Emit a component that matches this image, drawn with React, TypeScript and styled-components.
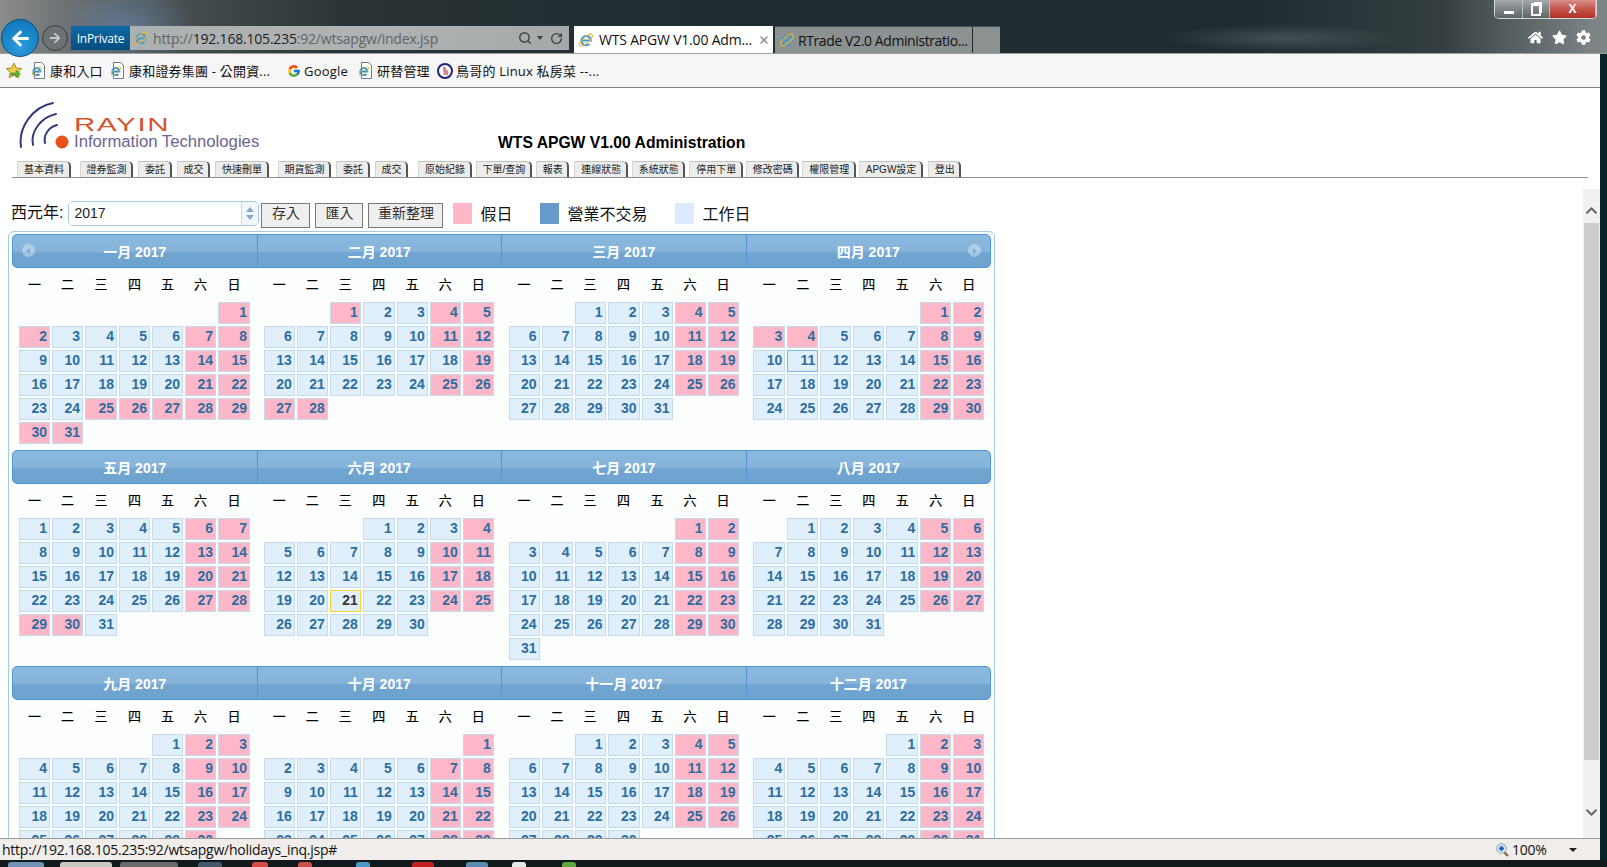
import styled, { createGlobalStyle } from "styled-components";
import { FaArrowLeft, FaArrowRight, FaHome, FaStar, FaCog, FaChevronUp, FaChevronDown } from "react-icons/fa";
import { FcGoogle } from "react-icons/fc";
import { Search, RotateCw, X } from "lucide-react";

const CJK = `"Liberation Sans", "Noto Sans CJK TC", sans-serif`;
const UI = `"Open Sans", "Noto Sans CJK TC", sans-serif`;

const GlobalStyle = createGlobalStyle`
  html, body {
    margin: 0;
    height: 100%;
    overflow: hidden;
    background: #0a2328;
    font-family: ${CJK};
  }
  #root {
    height: 100%;
  }
`;

const Screen = styled.div`
  width: 1607px;
  height: 867px;
  display: flex;
  flex-direction: column;
  overflow: hidden;
`;

/* ---- browser chrome ---- */
const TopChrome = styled.div`
  height: 53px;
  flex: none;
  display: flex;
  flex-direction: column;
  border-bottom: 1px solid #9aa0a0;
  background:
    radial-gradient(ellipse 70px 40px at 125px 25px, rgba(100, 135, 175, 0.55), transparent),
    radial-gradient(ellipse 120px 14px at 1280px 38px, rgba(130, 140, 140, 0.35), transparent),
    linear-gradient(90deg, #8b8c8c 0, #6b7072 70px, #454c4e 190px, #2b3436 340px, #1f2c31 700px, #1e2c31 1250px, #343e40 1440px, #7a8284 1590px, #7f8688 1607px);
`;

const WindowControls = styled.div`
  height: 25px;
  flex: none;
  display: flex;
  justify-content: flex-end;
  padding-right: 10px;
`;

const ControlGroup = styled.div`
  height: 18px;
  display: flex;
  border: 1px solid #d5d8d8;
  border-top: none;
  border-radius: 0 0 5px 5px;
  overflow: hidden;
`;

const ControlButton = styled.div<{ $width: number; $close?: boolean }>`
  width: ${(p) => p.$width}px;
  display: flex;
  align-items: center;
  justify-content: center;
  color: #fff;
  font: bold 12px "Liberation Sans", sans-serif;
  border-right: 1px solid #b7bcbc;
  background: ${(p) =>
    p.$close
      ? "linear-gradient(#d9908a, #c4544a 50%, #b23126)"
      : "linear-gradient(#a3a9aa, #7f8687 50%, #5e6566)"};
`;

const MinimizeGlyph = styled.span`
  width: 10px;
  height: 3px;
  margin-top: 6px;
  background: #fff;
`;

const RestoreGlyph = styled.span`
  width: 6px;
  height: 8px;
  border: 2px solid #fff;
  border-top-width: 3px;
  box-shadow: 2px -2px 0 -1px #fff;
`;

const NavRow = styled.div`
  flex: 1;
  display: flex;
  align-items: flex-end;
  position: relative;
  padding-left: 71px;
`;

const BackButton = styled.div`
  position: absolute;
  left: 1px;
  top: -6px;
  width: 36px;
  height: 36px;
  border-radius: 50%;
  background: radial-gradient(circle at 50% 75%, #2b9be0, #0b70b4);
  border: 1px solid #0b4d7a;
  display: flex;
  align-items: center;
  justify-content: center;
  color: #fff;
  font-size: 19px;
`;

const ForwardButton = styled.div`
  position: absolute;
  left: 42px;
  top: 0;
  width: 24px;
  height: 24px;
  border-radius: 50%;
  background: #6c7273;
  border: 1px solid #3a4041;
  display: flex;
  align-items: center;
  justify-content: center;
  color: #c4c8c8;
  font-size: 12px;
`;

const AddressBar = styled.div`
  width: 498px;
  height: 24px;
  margin-bottom: 3px;
  display: flex;
  align-items: center;
  background: linear-gradient(90deg, #aab0b1, #b0b3b3 60%, #a6a9a9);
  font: 14px ${UI};
  letter-spacing: -0.2px;
  color: #5e6466;
`;

const InPrivate = styled.div`
  width: 59px;
  height: 100%;
  flex: none;
  background: linear-gradient(#0d6aa6, #064d80);
  color: #fff;
  font-size: 12px;
  display: flex;
  align-items: center;
  justify-content: center;
`;

const AddressIcon = styled.span`
  margin-left: 3px;
  display: flex;
`;

const UrlText = styled.span`
  margin-left: 4px;
  flex: 1;
  b {
    font-weight: 400;
    color: #1e2224;
  }
`;

const BarTools = styled.div`
  display: flex;
  align-items: center;
  gap: 3px;
  padding-right: 6px;
  color: #3e4446;
`;

const TinyCaret = styled.span`
  width: 0;
  height: 0;
  border: 3px solid transparent;
  border-top: 4px solid #3e4446;
  margin: 3px 4px 0 2px;
`;

const TabStrip = styled.div`
  height: 27px;
  margin-left: 5px;
  display: flex;
`;

const BrowserTab = styled.div<{ $active?: boolean; $width: number }>`
  width: ${(p) => p.$width}px;
  display: flex;
  align-items: center;
  gap: ${(p) => (p.$active ? 5 : 3)}px;
  padding-left: 4px;
  box-sizing: border-box;
  font: 14px ${UI};
  letter-spacing: ${(p) => (p.$active ? -0.2 : -0.4)}px;
  white-space: nowrap;
  overflow: hidden;
  color: #111;
  background: ${(p) => (p.$active ? "#fff" : "#8c9292")};
  border-right: ${(p) => (p.$active ? "none" : "1px solid #262c2e")};
  border-top: ${(p) => (p.$active ? "none" : "1px solid #4a5052")};
  margin-right: ${(p) => (p.$active ? 2 : 0)}px;
`;

const TabClose = styled.span`
  margin-left: auto;
  margin-right: 3px;
  display: flex;
  color: #8d8d8d;
`;

const BlankTab = styled.div`
  width: 27px;
  background: #8c9292;
  border-top: 1px solid #4a5052;
`;

const ToolIcons = styled.div`
  position: absolute;
  right: 16px;
  top: 5px;
  display: flex;
  gap: 9px;
  color: #fff;
  font-size: 15px;
`;

const Middle = styled.div`
  flex: 1;
  min-height: 0;
  display: flex;
`;

const BrowserColumn = styled.div`
  flex: 1;
  min-width: 0;
  display: flex;
  flex-direction: column;
`;

const EdgeStrip = styled.div`
  width: 7px;
  flex: none;
  background: #0a2328;
`;

const FavBar = styled.div`
  height: 34px;
  flex: none;
  box-sizing: border-box;
  display: flex;
  align-items: center;
  padding-left: 6px;
  background: #f6f6f6;
  border-bottom: 1px solid #7f7f7f;
  font: 13px ${UI};
  letter-spacing: 0.2px;
  color: #111;
`;

const FavItem = styled.span<{ $width: number }>`
  width: ${(p) => p.$width}px;
  flex: none;
  display: flex;
  align-items: center;
  gap: 3px;
  white-space: nowrap;
`;

/* ---- page header frame ---- */
const PageArea = styled.div`
  flex: 1;
  min-height: 0;
  display: flex;
  flex-direction: column;
  background: #fff;
`;

const HeaderFrame = styled.div`
  height: 101px;
  flex: none;
`;

const HeaderTop = styled.div`
  height: 72px;
  display: flex;
  padding-left: 18px;
`;

const LogoBlock = styled.div`
  width: 480px;
  flex: none;
  display: flex;
  padding-top: 10px;
`;

const LogoText = styled.div`
  padding-top: 20px;
  display: flex;
  flex-direction: column;
`;

const LogoName = styled.span`
  display: block;
  font: 18px/15px "Liberation Sans", sans-serif;
  color: #d4552c;
  letter-spacing: 1px;
  transform: scaleX(1.64);
  transform-origin: left center;
`;

const LogoTag = styled.span`
  font: 16.7px/18px "Liberation Sans", sans-serif;
  color: #6b6490;
  white-space: nowrap;
`;

const Title = styled.h1`
  margin: 0;
  align-self: flex-end;
  padding-bottom: 8px;
  font: bold 15.7px "Liberation Sans", sans-serif;
  color: #000;
`;

const TabRow = styled.div`
  margin: 0 12px;
  padding-left: 5px;
  height: 18px;
  box-sizing: border-box;
  display: flex;
  border-bottom: 1px solid #8f8f8f;
`;

const MenuTab = styled.div<{ $gap: number }>`
  margin-left: ${(p) => p.$gap}px;
  height: 16px;
  margin-top: 1px;
  box-sizing: border-box;
  padding: 0 4.500px 0 6px;
  background: #ecedea;
  border-top: 1px solid #c4c4c4;
  border-left: 1px solid #d6d6d6;
  border-right: 2px solid #555;
  border-top-right-radius: 5px;
  font: 10px/16px ${CJK};
  color: #222;
  white-space: nowrap;
`;

const FrameBody = styled.div`
  flex: 1;
  min-height: 0;
  display: flex;
`;

const Content = styled.div`
  flex: 1;
  min-width: 0;
  overflow: hidden;
  padding: 12px 0 0 8px;
`;

const ScrollTrack = styled.div`
  width: 17px;
  flex: none;
  display: flex;
  flex-direction: column;
  background: #f0f0f0;
`;

const ScrollArrow = styled.div<{ $height: number; $align: string }>`
  height: ${(p) => p.$height}px;
  flex: none;
  display: flex;
  align-items: ${(p) => p.$align};
  justify-content: center;
  box-sizing: border-box;
  padding-bottom: 6px;
  color: #666;
  font-size: 13px;
`;

const ScrollThumb = styled.div`
  height: 537px;
  flex: none;
  margin: 0 1px;
  background: #cdcdcd;
`;

const ScrollRest = styled.div`
  flex: 1;
`;

/* ---- year form + legend ---- */
const FormRow = styled.div`
  height: 30px;
  display: flex;
  align-items: flex-start;
  font: 16px ${CJK};
  color: #111;
`;

const YearLabel = styled.span`
  margin: 2px 5px 0 3px;
  line-height: 20px;
`;

const YearField = styled.div`
  width: 189px;
  height: 23px;
  display: flex;
  border: 1px solid #a6c9e2;
  border-radius: 5px;
  overflow: hidden;
`;

const YearInput = styled.input`
  flex: 1;
  min-width: 0;
  border: none;
  outline: none;
  padding: 0 0 2px 5px;
  font: 14px "Liberation Sans", sans-serif;
  color: #222;
`;

const Spinner = styled.div`
  width: 17px;
  flex: none;
  display: flex;
  flex-direction: column;
  align-items: center;
  justify-content: space-around;
  padding: 3px 0;
  box-sizing: border-box;
  background: #f2f7fb;
  border-left: 1px solid #c5dbec;
`;

const SpinUp = styled.span`
  width: 0;
  height: 0;
  border: 4px solid transparent;
  border-top: none;
  border-bottom: 5px solid #7fa9cf;
`;

const SpinDown = styled.span`
  width: 0;
  height: 0;
  border: 4px solid transparent;
  border-bottom: none;
  border-top: 5px solid #7fa9cf;
`;

const FormButton = styled.button<{ $width: number; $gap: number }>`
  width: ${(p) => p.$width}px;
  height: 25px;
  margin: 2px 0 0 ${(p) => p.$gap}px;
  padding: 0 0 5px;
  border: 1px solid #777;
  background: #efefef;
  font: 14px/1 ${CJK};
  color: #333;
`;

const Swatch = styled.span<{ $color: string; $gap: number }>`
  width: 19px;
  height: 21px;
  margin: 2px 8px 0 ${(p) => p.$gap}px;
  background: ${(p) => p.$color};
`;

const LegendText = styled.span`
  margin-top: 4px;
  line-height: 20px;
`;

/* ---- datepicker ---- */
const Panel = styled.div`
  width: 979px;
  padding: 2px 3px 0;
  border: 1px solid #a6c9e2;
  border-radius: 6px;
  background: #fcfdfd;
`;

const MonthGroup = styled.div`
  height: 216px;
`;

const HeaderBar = styled.div`
  height: 34px;
  box-sizing: border-box;
  display: flex;
  border: 1px solid #4e97d4;
  border-radius: 5px;
  overflow: hidden;
  background: linear-gradient(#8ab7dc 0, #87b4da 50%, #70a5d1 56%, #6ea2cf 100%);
`;

const MonthTitle = styled.div`
  flex: 1 1 0;
  box-sizing: border-box;
  position: relative;
  display: flex;
  align-items: center;
  justify-content: center;
  color: #fff;
  font: bold 14px ${CJK};
  &:not(:last-child) {
    border-right: 1px solid #4e97d4;
  }
`;

const NavCircle = styled.span<{ $side: "left" | "right" }>`
  position: absolute;
  ${(p) => p.$side}: 9px;
  top: 9px;
  width: 13px;
  height: 13px;
  border-radius: 50%;
  background: rgba(255, 255, 255, 0.35);
  display: flex;
  align-items: center;
  justify-content: center;
  &::after {
    content: "";
    border: 3px solid transparent;
    ${(p) => (p.$side === "left" ? "border-right: 4px solid #7fadd3; margin-left: -4px;" : "border-left: 4px solid #7fadd3; margin-right: -4px;")}
  }
`;

const MonthsRow = styled.div`
  display: flex;
`;

const MonthBody = styled.div`
  flex: 1 1 0;
  padding-left: 7px;
`;

const WeekGrid = styled.div<{ $tracks: string }>`
  display: grid;
  box-sizing: border-box;
  grid-template-columns: ${(p) => p.$tracks};
  column-gap: 2px;
  height: 34px;
  padding-bottom: 4px;
  align-items: center;
  font: 13px ${CJK};
  color: #000;
  text-align: center;
  -webkit-text-stroke: 0.2px #000;
`;

const DayGrid = styled.div<{ $tracks: string }>`
  display: grid;
  grid-template-columns: ${(p) => p.$tracks};
  grid-auto-rows: 22px;
  gap: 2px;
`;

const DayCell = styled.div<{ $kind: "work" | "holiday" | "today" | "focus"; $offset: number }>`
  grid-column-start: ${(p) => p.$offset || "auto"};
  box-sizing: border-box;
  padding-right: 2px;
  text-align: right;
  font: bold 14px/19px "Liberation Sans", sans-serif;
  color: ${(p) => (p.$kind === "today" ? "#363636" : "#2e6e9e")};
  background: ${(p) => (p.$kind === "holiday" ? "#feb6c9" : "#dfeffc")};
  border: 1px solid ${(p) => (p.$kind === "today" ? "#fad42e" : p.$kind === "focus" ? "#79b7e7" : "#c5dbec")};
`;

/* ---- status and task bars ---- */
const StatusBar = styled.div`
  height: 22px;
  flex: none;
  box-sizing: border-box;
  display: flex;
  align-items: center;
  padding: 0 2px;
  background: #f0edeb;
  border-top: 1px solid #9a9a9a;
  font: 14px ${UI};
  letter-spacing: -0.25px;
  color: #111;
`;

const StatusUrl = styled.span`
  flex: 1;
`;

const ZoomGroup = styled.div`
  width: 102px;
  display: flex;
  align-items: center;
  gap: 3px;
`;

const ZoomCaret = styled.span`
  width: 0;
  height: 0;
  margin-left: 19px;
  border: 4px solid transparent;
  border-top: 4px solid #222;
  border-bottom: none;
`;

const Taskbar = styled.div`
  height: 7px;
  flex: none;
  display: flex;
  align-items: flex-end;
  background: #11191d;
  overflow: hidden;
`;

const TaskItem = styled.span<{ $left: number; $width: number; $color: string }>`
  margin-left: ${(p) => p.$left}px;
  width: ${(p) => p.$width}px;
  height: 5px;
  flex: none;
  background: ${(p) => p.$color};
  border-radius: 3px 3px 0 0;
`;

/* ---- small drawn icons ---- */
function IeIcon({ size = 16 }: { size?: number }) {
  return (
    <svg width={size} height={size} viewBox="0 0 16 16" style={{ flex: "none" }}>
      <path d="M3.6 8.6h9.2a4.7 4.7 0 1 0-1.3 3.3" fill="none" stroke="#3d9bd8" strokeWidth="2" />
      <ellipse cx="8" cy="8" rx="8" ry="3" transform="rotate(-42 8 8)" fill="none" stroke="#f0b429" strokeWidth="1" />
    </svg>
  );
}

function PageIcon() {
  return (
    <svg width="16" height="17" viewBox="0 0 16 17" style={{ flex: "none" }}>
      <path d="M3.5.5h7l3 3v13h-10z" fill="#fff" stroke="#6a7a8c" />
      <path d="M2 9.5h7.500a3.600 3.600 0 1 0-1 2.600" fill="none" stroke="#2f8fd4" strokeWidth="1.800" />
      <ellipse cx="6" cy="9" rx="6" ry="2.200" transform="rotate(-42 6 9)" fill="none" stroke="#f0b429" strokeWidth=".8" />
    </svg>
  );
}

function FavStar() {
  return (
    <svg width="17" height="18" viewBox="0 0 17 18" style={{ flex: "none" }}>
      <path d="M8 1l2.300 5 5.400.6-4 3.700 1.100 5.400L8 13l-4.800 2.700 1.100-5.400-4-3.700L5.700 6z" fill="#f2d04c" stroke="#a8871c" />
      <path d="M5 11h5V8.500l4.500 3.500L10 15.500V13H5z" fill="#62b63e" stroke="#3a7d20" strokeWidth=".6" />
    </svg>
  );
}

function BirdIcon() {
  return (
    <svg width="16" height="16" viewBox="0 0 16 16" style={{ flex: "none" }}>
      <circle cx="8" cy="8" r="7" fill="#fff" stroke="#24247a" strokeWidth="2" />
      <path d="M6 4c2-1 3 0 3 2 2 1 3 3 2 6H6c1-2 1-3 0-4z" fill="#d08a98" />
    </svg>
  );
}

function MagnifierIcon() {
  return (
    <svg width="13" height="14" viewBox="0 0 13 14" style={{ flex: "none" }}>
      <path d="M8 9l4 4" stroke="#8a6a3c" strokeWidth="2.400" />
      <circle cx="5.500" cy="5.500" r="4.800" fill="#d8e6f4" stroke="#8aa0b8" />
      <path d="M3 5.500h5M5.500 3v5" stroke="#1560c0" strokeWidth="2" />
    </svg>
  );
}

function LogoArcs() {
  return (
    <svg width="56" height="54" viewBox="0 0 56 54" style={{ flex: "none" }}>
      <g fill="none" stroke="#353a7a" strokeLinecap="round">
        <path d="M3 49C0 30 14 9 35 5" strokeWidth="2" />
        <path d="M15 47C12 34 23 19 38 16" strokeWidth="2" />
        <path d="M27 45C25 37 31 29 39 27" strokeWidth="2" />
      </g>
      <circle cx="44" cy="44" r="6.500" fill="#e8501a" />
    </svg>
  );
}

/* ---- data ---- */
const MENU: [string, number][] = [
  ["基本資料", 0], ["證券監測", 9], ["委託", 5], ["成交", 5], ["快速刪單", 5],
  ["期貨監測", 9], ["委託", 5], ["成交", 5], ["原始紀錄", 10], ["下單/查詢", 4],
  ["報表", 4], ["連線狀態", 5], ["系統狀態", 4], ["停用下單", 4], ["修改密碼", 3],
  ["權限管理", 3], ["APGW設定", 3], ["登出", 5],
];

const MONTH_NAMES = ["一月", "二月", "三月", "四月", "五月", "六月", "七月", "八月", "九月", "十月", "十一月", "十二月"];
const WEEK = ["一", "二", "三", "四", "五", "六", "日"];
const TRACKS = [
  "31px 31px 32px 31px 31px 31px 32px",
  "31px 31px 31px 32px 31px 31px 31px",
  "31px 31px 31px 32px 31px 31px 31px",
  "32px 31px 31px 31px 32px 31px 31px",
];

// extra closed days on top of the weekends
const EXTRA_HOLIDAYS: Record<number, number[]> = {
  0: [2, 25, 26, 27, 30, 31],
  1: [1, 27, 28],
  3: [3, 4],
  4: [29, 30],
};

// saturdays that were worked
const MAKEUP_DAYS: Record<number, number[]> = {
  1: [18],
  5: [3],
};

function dayKind(month: number, day: number) {
  if (month === 5 && day === 21) return "today" as const;
  if (MAKEUP_DAYS[month]?.includes(day)) return "work" as const;
  const weekday = new Date(2017, month, day).getDay();
  if (weekday === 0 || weekday === 6 || EXTRA_HOLIDAYS[month]?.includes(day)) return "holiday" as const;
  if (month === 3 && day === 11) return "focus" as const;
  return "work" as const;
}

function Month({ month, tracks }: { month: number; tracks: string }) {
  const count = new Date(2017, month + 1, 0).getDate();
  const firstColumn = ((new Date(2017, month, 1).getDay() + 6) % 7) + 1;
  return (
    <MonthBody>
      <WeekGrid $tracks={tracks}>
        {WEEK.map((w) => (
          <span key={w}>{w}</span>
        ))}
      </WeekGrid>
      <DayGrid $tracks={tracks}>
        {Array.from({ length: count }, (_, i) => (
          <DayCell key={i} $kind={dayKind(month, i + 1)} $offset={i === 0 ? firstColumn : 0}>
            {i + 1}
          </DayCell>
        ))}
      </DayGrid>
    </MonthBody>
  );
}

export default function App() {
  const groups = [0, 4, 8];
  return (
    <>
      <GlobalStyle />
      <Screen>
        <TopChrome>
          <WindowControls>
            <ControlGroup>
              <ControlButton $width={27}>
                <MinimizeGlyph />
              </ControlButton>
              <ControlButton $width={26}>
                <RestoreGlyph />
              </ControlButton>
              <ControlButton $width={45} $close>
                X
              </ControlButton>
            </ControlGroup>
          </WindowControls>
          <NavRow>
            <BackButton>
              <FaArrowLeft />
            </BackButton>
            <ForwardButton>
              <FaArrowRight />
            </ForwardButton>
            <AddressBar>
              <InPrivate>InPrivate</InPrivate>
              <AddressIcon>
                <IeIcon />
              </AddressIcon>
              <UrlText>
                http://<b>192.168.105.235</b>:92/wtsapgw/index.jsp
              </UrlText>
              <BarTools>
                <Search size={14} strokeWidth={2.5} />
                <TinyCaret />
                <RotateCw size={13} strokeWidth={2.5} />
              </BarTools>
            </AddressBar>
            <TabStrip>
              <BrowserTab $active $width={199}>
                <IeIcon />
                WTS APGW V1.00 Adm...
                <TabClose>
                  <X size={12} strokeWidth={3} />
                </TabClose>
              </BrowserTab>
              <BrowserTab $width={198}>
                <IeIcon />
                RTrade V2.0 Administratio...
              </BrowserTab>
              <BlankTab />
            </TabStrip>
            <ToolIcons>
              <FaHome />
              <FaStar />
              <FaCog />
            </ToolIcons>
          </NavRow>
        </TopChrome>
        <Middle>
          <BrowserColumn>
            <FavBar>
              <FavItem $width={25}>
                <FavStar />
              </FavItem>
              <FavItem $width={79}>
                <PageIcon />
                康和入口
              </FavItem>
              <FavItem $width={177}>
                <PageIcon />
                康和證券集團 - 公開資...
              </FavItem>
              <FavItem $width={71}>
                <FcGoogle size={14} />
                Google
              </FavItem>
              <FavItem $width={79}>
                <PageIcon />
                研替管理
              </FavItem>
              <FavItem $width={170}>
                <BirdIcon />
                鳥哥的 Linux 私房菜 --...
              </FavItem>
            </FavBar>
            <PageArea>
              <HeaderFrame>
                <HeaderTop>
                  <LogoBlock>
                    <LogoArcs />
                    <LogoText>
                      <LogoName>RAYIN</LogoName>
                      <LogoTag>Information Technologies</LogoTag>
                    </LogoText>
                  </LogoBlock>
                  <Title>WTS APGW V1.00 Administration</Title>
                </HeaderTop>
                <TabRow>
                  {MENU.map(([name, gap], i) => (
                    <MenuTab key={i} $gap={gap}>
                      {name}
                    </MenuTab>
                  ))}
                </TabRow>
              </HeaderFrame>
              <FrameBody>
                <Content>
                  <FormRow>
                    <YearLabel>西元年:</YearLabel>
                    <YearField>
                      <YearInput readOnly value="2017" />
                      <Spinner>
                        <SpinUp />
                        <SpinDown />
                      </Spinner>
                    </YearField>
                    <FormButton $width={49} $gap={2}>存入</FormButton>
                    <FormButton $width={48} $gap={5}>匯入</FormButton>
                    <FormButton $width={75} $gap={5}>重新整理</FormButton>
                    <Swatch $color="#feb6c9" $gap={10} />
                    <LegendText>假日</LegendText>
                    <Swatch $color="#6699cc" $gap={28} />
                    <LegendText>營業不交易</LegendText>
                    <Swatch $color="#dbeafc" $gap={28} />
                    <LegendText>工作日</LegendText>
                  </FormRow>
                  <Panel>
                    {groups.map((first) => (
                      <MonthGroup key={first}>
                        <HeaderBar>
                          {[0, 1, 2, 3].map((n) => (
                            <MonthTitle key={n}>
                              {first === 0 && n === 0 && <NavCircle $side="left" />}
                              {MONTH_NAMES[first + n]} 2017
                              {first === 0 && n === 3 && <NavCircle $side="right" />}
                            </MonthTitle>
                          ))}
                        </HeaderBar>
                        <MonthsRow>
                          {[0, 1, 2, 3].map((n) => (
                            <Month key={n} month={first + n} tracks={TRACKS[n]} />
                          ))}
                        </MonthsRow>
                      </MonthGroup>
                    ))}
                  </Panel>
                </Content>
                <ScrollTrack>
                  <ScrollArrow $height={34} $align="flex-end">
                    <FaChevronUp />
                  </ScrollArrow>
                  <ScrollThumb />
                  <ScrollRest />
                  <ScrollArrow $height={46} $align="center">
                    <FaChevronDown />
                  </ScrollArrow>
                </ScrollTrack>
              </FrameBody>
            </PageArea>
            <StatusBar>
              <StatusUrl>http://192.168.105.235:92/wtsapgw/holidays_inq.jsp#</StatusUrl>
              <ZoomGroup>
                <MagnifierIcon />
                100%
                <ZoomCaret />
              </ZoomGroup>
            </StatusBar>
          </BrowserColumn>
          <EdgeStrip />
        </Middle>
        <Taskbar>
          <TaskItem $left={8} $width={36} $color="#6f93b5" />
          <TaskItem $left={16} $width={52} $color="#c8c8c0" />
          <TaskItem $left={8} $width={58} $color="#6a6a6a" />
          <TaskItem $left={20} $width={24} $color="#46566a" />
          <TaskItem $left={30} $width={16} $color="#d84a4a" />
          <TaskItem $left={30} $width={14} $color="#c8504a" />
          <TaskItem $left={44} $width={14} $color="#4a9ac8" />
          <TaskItem $left={42} $width={22} $color="#c02020" />
          <TaskItem $left={32} $width={22} $color="#5a8ab0" />
          <TaskItem $left={24} $width={14} $color="#e8e8e8" />
          <TaskItem $left={36} $width={14} $color="#5ca83c" />
        </Taskbar>
      </Screen>
    </>
  );
}
